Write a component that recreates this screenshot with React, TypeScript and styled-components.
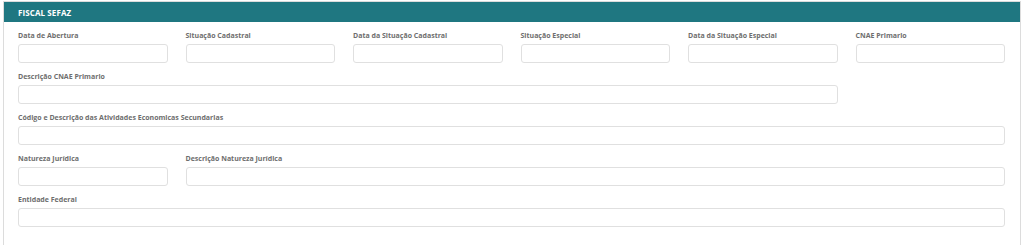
import React from "react";
import styled, { createGlobalStyle } from "styled-components";

const Global = createGlobalStyle`
  html, body { margin: 0; padding: 0; background: #ffffff; overflow: hidden; }
  body { font-family: "Open Sans", "Liberation Sans", sans-serif; }
`;

const Page = styled.div`
  box-sizing: border-box;
  padding: 1px 3px 0 3px;
  width: 1024px;
  height: 245px;
  display: flex;
`;

const Panel = styled.section`
  flex: 1;
  border: 1px solid #dcdcdc;
  border-bottom: none;
  background: #fff;
`;

const Header = styled.header`
  background: #1f7781;
  height: 20px;
  display: flex;
  align-items: center;
  padding-left: 14px;
  color: #ffffff;
  font-weight: 700;
  font-size: 8px;
  letter-spacing: 0.1px;
`;

const Body = styled.div`
  display: grid;
  grid-template-columns: repeat(6, 1fr);
  column-gap: 18px;
  row-gap: 9px;
  padding: 9px 15px 0 14px;
`;

const Field = styled.div<{ $span: number }>`
  grid-column: span ${(p) => p.$span};
  display: flex;
  flex-direction: column;
  gap: 3px;
`;

const Label = styled.label`
  font-size: 7px;
  line-height: 10px;
  font-weight: 700;
  color: #6e6e6e;
  white-space: nowrap;
`;

const Input = styled.input`
  box-sizing: border-box;
  height: 19px;
  width: 100%;
  border: 1px solid #e0e0e0;
  border-radius: 3px;
  background: #fff;
  margin: 0;
  padding: 0 6px;
  outline: none;
`;

const Spacer = styled.div<{ $span: number }>`
  grid-column: span ${(p) => p.$span};
`;

const fields: { label?: string; span: number }[] = [
  { label: "Data de Abertura", span: 1 },
  { label: "Situação Cadastral", span: 1 },
  { label: "Data da Situação Cadastral", span: 1 },
  { label: "Situação Especial", span: 1 },
  { label: "Data da Situação Especial", span: 1 },
  { label: "CNAE Primario", span: 1 },
  { label: "Descrição CNAE Primario", span: 5 },
  { span: 1 },
  { label: "Código e Descrição das Atividades Economicas Secundarias", span: 6 },
  { label: "Natureza Jurídica", span: 1 },
  { label: "Descrição Natureza Jurídica", span: 5 },
  { label: "Entidade Federal", span: 6 },
];

export default function App() {
  return (
    <>
      <Global />
      <Page>
        <Panel>
          <Header>FISCAL SEFAZ</Header>
          <Body>
            {fields.map((f, i) =>
              f.label ? (
                <Field key={i} $span={f.span}>
                  <Label>{f.label}</Label>
                  <Input type="text" />
                </Field>
              ) : (
                <Spacer key={i} $span={f.span} />
              )
            )}
          </Body>
        </Panel>
      </Page>
    </>
  );
}
